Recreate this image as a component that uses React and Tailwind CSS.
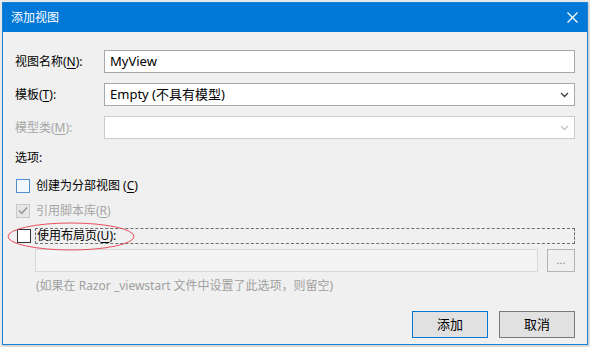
import React from 'react';

const font = "font-['Noto_Sans','Noto_Sans_CJK_SC',sans-serif]";

function Chevron({ disabled }) {
  return (
    <svg width="9" height="6" viewBox="0 0 9 6" className="shrink-0">
      <path
        d="M1 1 L4.5 4.5 L8 1"
        fill="none"
        stroke={disabled ? '#c4c4c4' : '#404040'}
        strokeWidth="1.3"
      />
    </svg>
  );
}

function Key({ children }) {
  return <span className="underline underline-offset-2">{children}</span>;
}

function FieldRow({ label, disabled, children }) {
  return (
    <div className="flex items-center h-[23px]">
      <div className={`w-[89px] shrink-0 text-[12px] ${disabled ? 'text-[#a6a6a6]' : 'text-black'}`}>
        {label}
      </div>
      {children}
    </div>
  );
}

export default function App() {
  return (
    <div className={`w-[590px] h-[347px] bg-[#e9e9e9] pt-[2px] pl-[2px] ${font}`}>
      <div className="w-[586px] h-[343px] border border-[#1883d7] bg-[#f0f0f0] flex flex-col shadow-[1px_1px_2px_rgba(0,0,0,0.15)]">
        {/* title bar */}
        <div className="h-[29px] shrink-0 bg-[#0078d7] flex items-center justify-between pl-[8px] pr-[9px] text-white text-[12px]">
          <span>添加视图</span>
          <svg width="11" height="11" viewBox="0 0 11 11">
            <path d="M0.5 0.5 L10.5 10.5 M10.5 0.5 L0.5 10.5" stroke="#fff" strokeWidth="1.2" />
          </svg>
        </div>

        <div className="flex-1 flex flex-col px-[12px] pt-[18px] relative">
          <div className="flex flex-col gap-[10px]">
            <FieldRow label={<>视图名称(<Key>N</Key>):</>}>
              <div className="flex-1 h-[23px] bg-white border border-[#a8a8a8] flex items-center px-[5px] text-[13px] text-black">
                MyView
              </div>
            </FieldRow>
            <FieldRow label={<>模板(<Key>T</Key>):</>}>
              <div className="flex-1 h-[23px] bg-white border border-[#a8a8a8] flex items-center justify-between pl-[5px] pr-[5px] text-[13px] text-black">
                <span>Empty (不具有模型)</span>
                <Chevron />
              </div>
            </FieldRow>
            <FieldRow disabled label={<>模型类(<Key>M</Key>):</>}>
              <div className="flex-1 h-[23px] bg-white border border-[#cccccc] flex items-center justify-end pr-[5px]">
                <Chevron disabled />
              </div>
            </FieldRow>
          </div>

          <div className="h-[20px] mt-[9px] flex items-center text-[12px] text-black">选项:</div>

          <div className="mt-[5px] flex flex-col">
            <div className="h-[25px] flex items-center gap-[6px] pl-[1px] text-[12px] text-black">
              <div className="w-[14px] h-[14px] border border-[#4f8fcf] bg-[#f3f8ff]" />
              <span>
                创建为分部视图 (<Key>C</Key>)
              </span>
            </div>
            <div className="h-[25px] flex items-center gap-[6px] pl-[1px] text-[12px] text-[#a6a6a6]">
              <div className="w-[14px] h-[14px] border border-[#c8c8c8] bg-[#e6e6e6] flex items-center justify-center">
                <svg width="10" height="9" viewBox="0 0 10 9">
                  <path d="M1 4.5 L3.8 7.3 L9 1.5" fill="none" stroke="#9a9a9a" strokeWidth="1.6" />
                </svg>
              </div>
              <span>
                引用脚本库(<Key>R</Key>)
              </span>
            </div>
            <div className="h-[25px] flex items-center gap-[4px] pl-[2px] text-[12px] text-black relative">
              <div className="w-[14px] h-[14px] border border-[#333333] bg-white shrink-0" />
              <div className="flex-1 h-[16px] border border-dashed border-[#6e6e6e] flex items-center pl-[1px]">
                使用布局页(<Key>U</Key>):
              </div>
              <svg
                className="absolute left-[-8px] top-[-1px] pointer-events-none"
                width="128"
                height="29"
                viewBox="0 0 128 29"
              >
                <ellipse cx="64" cy="14.5" rx="63" ry="13.5" fill="none" stroke="#e8505a" strokeWidth="1" />
              </svg>
            </div>
          </div>

          <div className="mt-[1px] ml-[20px] flex items-center gap-[9px]">
            <div className="flex-1 h-[23px] bg-[#f4f4f4] border border-[#d9d9d9]" />
            <div className="w-[28px] h-[23px] border border-[#b4b4b4] bg-[#f0f0f0] flex items-center justify-center text-[11px] text-[#8a8a8a] leading-none pb-[3px]">
              ...
            </div>
          </div>

          <div className="h-[28px] ml-[21px] flex items-center text-[12px] text-[#a0a0a0]">
            (如果在 Razor _viewstart 文件中设置了此选项，则留空)
          </div>

          <div className="mt-[11px] flex justify-end gap-[11px]">
            <button className="w-[76px] h-[27px] bg-[#e1e1e1] border border-[#0078d7] text-[13px] text-black">
              添加
            </button>
            <button className="w-[76px] h-[27px] bg-[#e1e1e1] border border-[#7a7a7a] text-[13px] text-black">
              取消
            </button>
          </div>
        </div>
      </div>
    </div>
  );
}
